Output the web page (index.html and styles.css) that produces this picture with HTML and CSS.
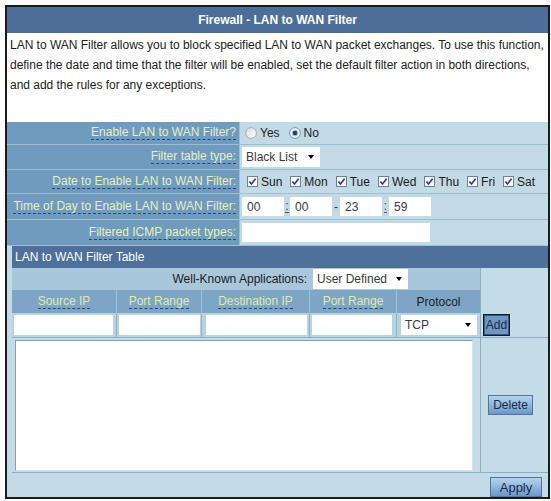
FILE: index.html
```html
<!DOCTYPE html>
<html>
<head>
<meta charset="utf-8">
<title>Firewall - LAN to WAN Filter</title>
<link rel="stylesheet" href="styles.css">
</head>
<body>
<div class="frame">
  <div class="title">Firewall - LAN to WAN Filter</div>
  <div class="desc">LAN to WAN Filter allows you to block specified LAN to WAN packet exchanges. To use this function,<br>define the date and time that the filter will be enabled, set the default filter action in both directions,<br>and add the rules for any exceptions.</div>
  <div class="form">
    <div class="row h23">
      <div class="lab"><span class="u">Enable LAN to WAN Filter?</span></div>
      <div class="val">
        <svg class="radio" width="12" height="12" viewBox="0 0 12 12"><defs><linearGradient id="rg" x1="0" y1="0" x2="1" y2="1"><stop offset="0" stop-color="#d8d8d8"/><stop offset="1" stop-color="#ffffff"/></linearGradient></defs><circle cx="6" cy="6" r="5.4" fill="url(#rg)" stroke="#a3abb4" stroke-width="1"/></svg><span class="rtext">Yes</span>
        <svg class="radio" width="12" height="12" viewBox="0 0 12 12"><circle cx="6" cy="6" r="5.4" fill="#f4f6f8" stroke="#7d8fa6" stroke-width="1"/><circle cx="6" cy="6" r="3.3" fill="#9fc4e4"/><circle cx="6" cy="6" r="2.2" fill="#1f3f6a"/></svg><span class="rtext">No</span>
      </div>
    </div>
    <div class="row h25">
      <div class="lab"><span class="u">Filter table type:</span></div>
      <div class="val"><div class="sel sel-type"><span>Black List</span><span class="arrow"></span></div></div>
    </div>
    <div class="row h24">
      <div class="lab"><span class="u">Date to Enable LAN to WAN Filter:</span></div>
      <div class="val days">
        <span class="day"><svg class="cb" width="11" height="11" viewBox="0 0 11 11"><rect x="0.5" y="0.5" width="10" height="10" fill="#f7f7f9" stroke="#6f829c"/><path d="M2.4 5.4 L4.5 7.9 L8.6 2.8" fill="none" stroke="#33398f" stroke-width="1.6"/></svg>Sun</span>
        <span class="day"><svg class="cb" width="11" height="11" viewBox="0 0 11 11"><rect x="0.5" y="0.5" width="10" height="10" fill="#f7f7f9" stroke="#6f829c"/><path d="M2.4 5.4 L4.5 7.9 L8.6 2.8" fill="none" stroke="#33398f" stroke-width="1.6"/></svg>Mon</span>
        <span class="day"><svg class="cb" width="11" height="11" viewBox="0 0 11 11"><rect x="0.5" y="0.5" width="10" height="10" fill="#f7f7f9" stroke="#6f829c"/><path d="M2.4 5.4 L4.5 7.9 L8.6 2.8" fill="none" stroke="#33398f" stroke-width="1.6"/></svg>Tue</span>
        <span class="day"><svg class="cb" width="11" height="11" viewBox="0 0 11 11"><rect x="0.5" y="0.5" width="10" height="10" fill="#f7f7f9" stroke="#6f829c"/><path d="M2.4 5.4 L4.5 7.9 L8.6 2.8" fill="none" stroke="#33398f" stroke-width="1.6"/></svg>Wed</span>
        <span class="day"><svg class="cb" width="11" height="11" viewBox="0 0 11 11"><rect x="0.5" y="0.5" width="10" height="10" fill="#f7f7f9" stroke="#6f829c"/><path d="M2.4 5.4 L4.5 7.9 L8.6 2.8" fill="none" stroke="#33398f" stroke-width="1.6"/></svg>Thu</span>
        <span class="day"><svg class="cb" width="11" height="11" viewBox="0 0 11 11"><rect x="0.5" y="0.5" width="10" height="10" fill="#f7f7f9" stroke="#6f829c"/><path d="M2.4 5.4 L4.5 7.9 L8.6 2.8" fill="none" stroke="#33398f" stroke-width="1.6"/></svg>Fri</span>
        <span class="day"><svg class="cb" width="11" height="11" viewBox="0 0 11 11"><rect x="0.5" y="0.5" width="10" height="10" fill="#f7f7f9" stroke="#6f829c"/><path d="M2.4 5.4 L4.5 7.9 L8.6 2.8" fill="none" stroke="#33398f" stroke-width="1.6"/></svg>Sat</span>
      </div>
    </div>
    <div class="row h26">
      <div class="lab"><span class="u">Time of Day to Enable LAN to WAN Filter:</span></div>
      <div class="val">
        <div class="inp t">00</div><span class="sep s6"><span class="u2">:</span></span>
        <div class="inp t">00</div><span class="sep s8">-</span>
        <div class="inp t">23</div><span class="sep s7"><span class="u2">:</span></span>
        <div class="inp t">59</div>
      </div>
    </div>
    <div class="row h26">
      <div class="lab"><span class="u">Filtered ICMP packet types:</span></div>
      <div class="val"><div class="inp icmp"></div></div>
    </div>
  </div>
  <div class="lower">
    <div class="band">LAN to WAN Filter Table</div>
    <div class="grid">
      <div class="wk">Well-Known Applications:</div>
      <div class="wksel"><div class="sel sel-app"><span>User Defined</span><span class="arrow"></span></div></div>
      <div class="side add-cell"><button class="btn btn-add">Add</button></div>
      <div class="hd"><span class="u">Source IP</span></div>
      <div class="hd"><span class="u">Port Range</span></div>
      <div class="hd"><span class="u">Destination IP</span></div>
      <div class="hd"><span class="u">Port Range</span></div>
      <div class="hd last dark">Protocol</div>
      <div class="ic"><div class="inp w99"></div></div>
      <div class="ic"><div class="inp w81"></div></div>
      <div class="ic c3"><div class="inp w102"></div></div>
      <div class="ic"><div class="inp w80"></div></div>
      <div class="ic last c5"><div class="sel sel-proto"><span>TCP</span><span class="arrow"></span></div></div>
      <div class="listcell"><div class="listbox"></div></div>
      <div class="side del-cell"><button class="btn btn-del">Delete</button></div>
    </div>
    <div class="bottom"><button class="btn btn-apply">Apply</button></div>
  </div>
</div>
</body>
</html>
```

FILE: styles.css
```css
body {
  margin: 0;
  background: #ffffff;
  font-family: "Liberation Sans", Arial, sans-serif;
  font-size: 12px;
  color: #1c1c1c;
}

.frame {
  margin: 5px 0 0 5px;
  width: 541px;
  height: 490px;
  border: 2px solid #1b1b1b;
  display: flex;
  flex-direction: column;
  background: #c3dbe7;
}

.title {
  height: 26px;
  flex: none;
  background: #4c6e98;
  color: #ffffff;
  font-weight: bold;
  display: flex;
  align-items: center;
  justify-content: center;
}

.desc {
  height: 89px;
  flex: none;
  box-sizing: border-box;
  background: #ffffff;
  padding: 2px 3px 0;
  line-height: 20px;
  color: #222222;
  white-space: nowrap;
  letter-spacing: -0.02px;
}

.form {
  flex: none;
}

.row {
  display: flex;
  box-sizing: border-box;
  border-bottom: 1px solid #9dbdd1;
}

.h23 { height: 23px; }
.h24 { height: 24px; }
.h25 { height: 25px; }
.h26 { height: 26px; }

.lab {
  width: 233px;
  flex: none;
  box-sizing: border-box;
  background: #6f9bbf;
  border-right: 1px solid #9dbdd1;
  padding-right: 3px;
  display: flex;
  align-items: center;
  justify-content: flex-end;
}

.u {
  color: #e9efbe;
  border-bottom: 1px dashed #27487a;
  line-height: 13px;
}

.val {
  flex: 1;
  background: #c1dae6;
  padding-left: 2px;
  display: flex;
  align-items: center;
  color: #1c1c1c;
}

.radio {
  margin-left: 3px;
  flex: none;
}

.rtext {
  margin-left: 3px;
  margin-right: 6px;
}

.days {
  padding-left: 7px;
}

.day {
  display: inline-flex;
  align-items: center;
  margin-right: 8px;
}

.cb {
  margin-right: 3px;
  flex: none;
}

.sel {
  background: #ffffff;
  height: 20px;
  box-sizing: border-box;
  display: flex;
  align-items: center;
  justify-content: space-between;
  padding: 0 6px 0 4px;
  color: #3a3a3a;
}

.arrow {
  width: 0;
  height: 0;
  border-left: 3.5px solid transparent;
  border-right: 3.5px solid transparent;
  border-top: 4px solid #000000;
}

.sel-type { width: 78px; }
.sel-app { width: 95px; }
.sel-proto { width: 76px; }

.inp {
  background: #ffffff;
  height: 20px;
  box-sizing: border-box;
  padding-left: 5px;
  display: flex;
  align-items: center;
  color: #3c3c3c;
}

.t { width: 42px; height: 19px; }
.icmp { width: 188px; height: 19px; }

.sep {
  display: inline-flex;
  justify-content: center;
  color: #333;
}

.s6 { width: 6px; }
.s7 { width: 7px; }
.s8 { width: 8px; }

.u2 {
  border-bottom: 1px dashed #3a5a8a;
  line-height: 12px;
}

.lower {
  flex: 1;
  padding-left: 5px;
  display: flex;
  flex-direction: column;
}

.band {
  height: 22px;
  flex: none;
  background: #4e709a;
  color: #ffffff;
  padding-left: 3px;
  display: flex;
  align-items: center;
}

.grid {
  display: grid;
  grid-template-columns: 105px 85px 108px 87px 83px 68px;
  grid-template-rows: 22px 23px 25px 134px;
}

.wk {
  grid-column: 1 / 4;
  grid-row: 1;
  background: #a9c7db;
  display: flex;
  align-items: center;
  justify-content: flex-end;
  padding-right: 3px;
  color: #1c1c1c;
}

.wksel {
  grid-column: 4 / 6;
  grid-row: 1;
  background: #a9c7db;
  padding-left: 3px;
  display: flex;
  align-items: center;
}

.side {
  grid-column: 6;
  background: #c3dce8;
  border-left: 1px solid #8eb0c5;
  box-sizing: border-box;
}

.add-cell {
  grid-row: 1 / 4;
  border-bottom: 1px solid #8eb0c5;
  display: flex;
  align-items: flex-end;
  padding: 0 0 1px 2px;
}

.hd {
  grid-row: 2;
  background: #7ca5c6;
  border-right: 1px solid #a3c2d6;
  display: flex;
  align-items: center;
  justify-content: center;
}

.hd .u {
  color: #e2eaa8;
}

.dark {
  color: #1c1c1c;
}

.last {
  border-right: none;
}

.ic {
  grid-row: 3;
  background: #b7d2e1;
  border-right: 1px solid #8eb0c5;
  border-bottom: 1px solid #8eb0c5;
  box-sizing: border-box;
  padding: 2px 0 0 2px;
}

.c3 { padding-left: 4px; }
.c5 { padding-left: 4px; border-right: none; }

.w99 { width: 99px; }
.w81 { width: 81px; }
.w102 { width: 101px; }
.w80 { width: 80px; }

.listcell {
  grid-column: 1 / 6;
  grid-row: 4;
  background: #c3dce8;
  padding: 2px 0 0 3px;
}

.listbox {
  width: 458px;
  height: 131px;
  box-sizing: border-box;
  background: #ffffff;
  border: 1px solid;
  border-color: #8e9aa4 #d8e2e8 #d8e2e8 #8e9aa4;
}

.del-cell {
  grid-row: 4;
  display: flex;
  align-items: center;
  padding-left: 7px;
}

.bottom {
  flex: 1;
  border-top: 1px solid #8eb0c5;
  display: flex;
  justify-content: flex-end;
  align-items: flex-end;
  padding-right: 6px;
}

.btn {
  font-family: "Liberation Sans", Arial, sans-serif;
  font-size: 12px;
  color: #1a2c48;
  background: linear-gradient(#b6d3ee, #6b98c9);
  border: 1px solid #4f76a2;
  padding: 0;
  box-sizing: border-box;
}

.btn-add {
  width: 27px;
  height: 22px;
  background: #6e96c2;
  border: 1px solid #0e1b30;
  box-shadow: inset 0 0 0 1px #34587f;
}

.btn-del {
  width: 45px;
  height: 20px;
}

.btn-apply {
  width: 52px;
  height: 20px;
  font-size: 13px;
}
```
